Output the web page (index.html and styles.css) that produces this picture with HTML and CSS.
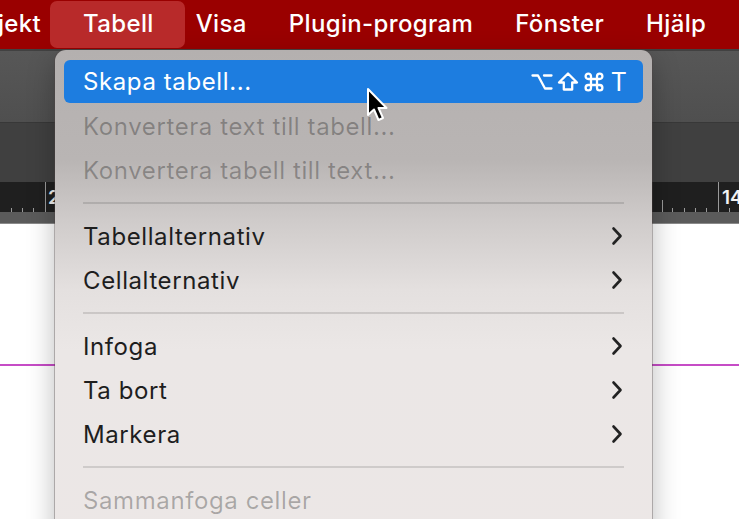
FILE: index.html
```html
<!DOCTYPE html>
<html lang="sv">
<head>
<meta charset="utf-8">
<title>Tabell-meny</title>
<link rel="stylesheet" href="styles.css">
</head>
<body>
<div class="app">
  <nav class="menubar">
    <span class="mb-item first">Objekt</span>
    <span class="mb-item active">Tabell</span>
    <span class="mb-item">Visa</span>
    <span class="mb-item">Plugin-program</span>
    <span class="mb-item">Fönster</span>
    <span class="mb-item">Hjälp</span>
  </nav>
  <div class="toolbar"></div>
  <div class="controlbar"></div>
  <div class="ruler">
    <svg class="ruler-svg" width="739" height="30" viewBox="0 0 739 30">
      <g stroke="#9a9a9a" stroke-width="1">
        <line x1="11.5" y1="26" x2="11.5" y2="30"/>
        <line x1="22.5" y1="26" x2="22.5" y2="30"/>
        <line x1="33.5" y1="26" x2="33.5" y2="30"/>
        <line x1="45.5" y1="0" x2="45.5" y2="30"/>
        <line x1="662.5" y1="18" x2="662.5" y2="30"/>
        <line x1="672.5" y1="26" x2="672.5" y2="30"/>
        <line x1="684.5" y1="26" x2="684.5" y2="30"/>
        <line x1="695.5" y1="26" x2="695.5" y2="30"/>
        <line x1="706.5" y1="26" x2="706.5" y2="30"/>
        <line x1="718.5" y1="0" x2="718.5" y2="30"/>
        <line x1="729.5" y1="26" x2="729.5" y2="30"/>
      </g>
      <text x="48" y="22" class="ruler-num">2</text>
      <text x="722" y="22" class="ruler-num">14</text>
    </svg>
  </div>
  <div class="ruler-foot"></div>
  <div class="page">
    <div class="guide"></div>
  </div>

  <div class="menu">
    <div class="item highlighted">
      <span class="label">Skapa tabell...</span>
      <span class="shortcut" aria-label="Alt Skift Kommando T">
        <svg class="kg" width="22" height="22" viewBox="0 0 22 22"><path d="M1.5 4.5 H7 L14 17.5 H20.5 M13 4.5 H20.5"/></svg>
        <svg class="kg" width="22" height="22" viewBox="0 0 22 22"><path d="M11 2.5 L20 11.5 H15.2 V18.5 H6.8 V11.5 H2 Z"/></svg>
        <svg class="kg" width="22" height="22" viewBox="0 0 22 22"><path d="M8 8 V5.3 A2.7 2.7 0 1 0 5.3 8 H16.7 A2.7 2.7 0 1 0 14 5.3 V16.7 A2.7 2.7 0 1 0 16.7 14 H5.3 A2.7 2.7 0 1 0 8 16.7 Z"/></svg>
        <span class="key">T</span>
      </span>
    </div>
    <div class="item disabled"><span class="label">Konvertera text till tabell...</span></div>
    <div class="item disabled"><span class="label">Konvertera tabell till text...</span></div>
    <div class="sep"></div>
    <div class="item"><span class="label">Tabellalternativ</span><svg class="chev" width="12" height="20" viewBox="0 0 12 20"><path d="M2.5 2.5 L9.5 10 L2.5 17.5"/></svg></div>
    <div class="item"><span class="label">Cellalternativ</span><svg class="chev" width="12" height="20" viewBox="0 0 12 20"><path d="M2.5 2.5 L9.5 10 L2.5 17.5"/></svg></div>
    <div class="sep"></div>
    <div class="item"><span class="label">Infoga</span><svg class="chev" width="12" height="20" viewBox="0 0 12 20"><path d="M2.5 2.5 L9.5 10 L2.5 17.5"/></svg></div>
    <div class="item"><span class="label">Ta bort</span><svg class="chev" width="12" height="20" viewBox="0 0 12 20"><path d="M2.5 2.5 L9.5 10 L2.5 17.5"/></svg></div>
    <div class="item"><span class="label">Markera</span><svg class="chev" width="12" height="20" viewBox="0 0 12 20"><path d="M2.5 2.5 L9.5 10 L2.5 17.5"/></svg></div>
    <div class="sep"></div>
    <div class="item disabled"><span class="label">Sammanfoga celler</span></div>
  </div>

  <svg class="cursor" width="24" height="36" viewBox="0 0 24 36">
    <path d="M2 2 L2 28 L8 22.5 L12.5 33 L17 31 L12.5 21 L20.5 21 Z" fill="#000" stroke="#fff" stroke-width="2" stroke-linejoin="round"/>
  </svg>
</div>
</body>
</html>
```
FILE: styles.css
```css
html, body {
  margin: 0;
  padding: 0;
}
body {
  width: 739px;
  height: 519px;
  overflow: hidden;
  background: #fff;
  font-family: "Inter", "Noto Sans", "DejaVu Sans", sans-serif;
}
.app {
  position: relative;
  width: 739px;
  height: 519px;
  overflow: hidden;
  display: flex;
  flex-direction: column;
}
.menubar {
  height: 49px;
  flex: none;
  background: #9a0000;
  display: flex;
  align-items: center;
  gap: 42px;
  color: #fff;
  font-size: 24px;
  letter-spacing: 0.35px;
  font-weight: 500;
  white-space: nowrap;
}
.mb-item {
  position: relative;
  line-height: 46px;
  padding-bottom: 1px;
}
.mb-item.first {
  margin-left: -36px;
}
.mb-item.active {
  z-index: 1;
}
.mb-item.active::before {
  content: "";
  position: absolute;
  left: -33px;
  right: -31px;
  top: 0;
  bottom: 0;
  border-radius: 7px;
  background: #b82a2a;
  z-index: -1;
}
.toolbar {
  height: 71px;
  flex: none;
  border-top: 2px solid #414141;
  background: linear-gradient(#575757, #4f4f4f);
  border-bottom: 1px solid #383838;
}
.controlbar {
  height: 59px;
  flex: none;
  background: #404040;
}
.ruler {
  height: 30px;
  flex: none;
  background: #1f1f1f;
}
.ruler-svg {
  display: block;
}
.ruler-num {
  fill: #f2f2f2;
  font-family: "Inter", "DejaVu Sans", sans-serif;
  font-size: 19px;
  font-weight: 600;
}
.ruler-foot {
  height: 11px;
  flex: none;
  background: #5b5b5b;
  border-bottom: 1px solid #8a8a8a;
}
.page {
  flex: 1;
  background: #fff;
}
.guide {
  margin-top: 140px;
  height: 1.5px;
  background: #c64cc6;
}
.menu {
  position: absolute;
  left: 55px;
  top: 50px;
  width: 597px;
  height: 520px;
  box-sizing: border-box;
  padding: 10px 9px;
  border-radius: 11px;
  background: linear-gradient(to bottom, #b4b0af 0px, #b9b5b4 110px, #cfcbca 170px, #e4e0df 240px, #ebe7e6 300px, #ece7e6 100%);
  box-shadow: 0 0 0 1px rgba(80, 70, 70, 0.35), 0 10px 28px rgba(0, 0, 0, 0.28);
  font-size: 24px;
  letter-spacing: 0.6px;
  color: #1e1e1e;
}
.item {
  height: 44px;
  display: flex;
  align-items: center;
  justify-content: space-between;
  padding: 0 20px 0 19px;
  border-radius: 6px;
  white-space: nowrap;
}
.item.highlighted {
  height: 43px;
  margin-bottom: 1px;
  background: #1d7de0;
  color: #fff;
  padding-right: 16px;
}
.item.disabled {
  color: rgba(0, 0, 0, 0.28);
}
.shortcut {
  display: flex;
  align-items: center;
  gap: 4px;
}
.kg {
  display: block;
}
.kg path {
  fill: none;
  stroke: #fff;
  stroke-width: 2.3;
  stroke-linejoin: round;
  stroke-linecap: round;
}
.key {
  font-size: 25px;
  margin-left: 2px;
  letter-spacing: 0;
}
.chev {
  display: block;
}
.chev path {
  fill: none;
  stroke: #222;
  stroke-width: 2.6;
  stroke-linecap: round;
  stroke-linejoin: round;
}
.sep {
  height: 2px;
  margin: 10px 19px;
  background: rgba(0, 0, 0, 0.12);
}
.cursor {
  position: absolute;
  left: 366px;
  top: 87px;
}
```
